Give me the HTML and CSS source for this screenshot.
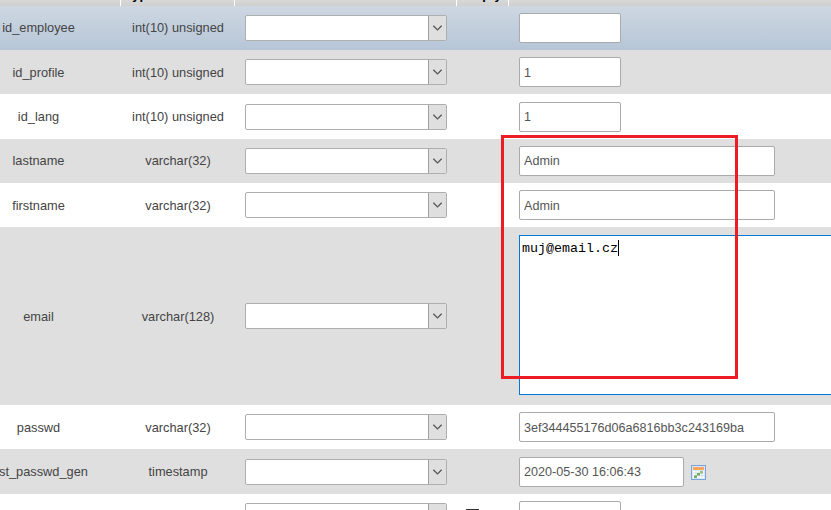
FILE: index.html
```html
<!DOCTYPE html>
<html lang="en">
<head>
<meta charset="utf-8">
<title>Insert</title>
<link rel="stylesheet" href="styles.css">
</head>
<body>
<svg class="defs" width="0" height="0"><symbol id="chev" viewBox="0 0 17 26"><path d="M4 10.5 L8.5 15 L13 10.5" fill="none" stroke="#555" stroke-width="1.4"/></symbol></svg>
<div class="page">
<table class="grid">
<colgroup><col class="c1"><col class="c2"><col class="c3"><col class="c4"><col class="c5"></colgroup>
<thead><tr>
<th><div class="hd"><span>Column</span></div></th>
<th class="left"><div class="hd"><span>Type</span></div></th>
<th><div class="hd"><span>Function</span></div></th>
<th><div class="hd"><span>Empty</span></div></th>
<th><div class="hd"><span>Value</span></div></th>
</tr></thead>
<tbody>
<tr class="r44 blue">
<td>id_employee</td><td>int(10) unsigned</td>
<td><div class="sel"><div class="box"></div><div class="btn"><svg width="17" height="24"><use href="#chev"/></svg></div></div></td><td></td>
<td><input class="inp short" value=""></td>
</tr>
<tr class="r44 grey low">
<td>id_profile</td><td>int(10) unsigned</td>
<td><div class="sel"><div class="box"></div><div class="btn"><svg width="17" height="24"><use href="#chev"/></svg></div></div></td><td></td>
<td><input class="inp short" value="1"></td>
</tr>
<tr class="r45">
<td>id_lang</td><td>int(10) unsigned</td>
<td><div class="sel"><div class="box"></div><div class="btn"><svg width="17" height="24"><use href="#chev"/></svg></div></div></td><td></td>
<td><input class="inp short" value="1"></td>
</tr>
<tr class="r44 grey">
<td>lastname</td><td>varchar(32)</td>
<td><div class="sel"><div class="box"></div><div class="btn"><svg width="17" height="24"><use href="#chev"/></svg></div></div></td><td></td>
<td><input class="inp long" value="Admin"></td>
</tr>
<tr class="r44 low">
<td>firstname</td><td>varchar(32)</td>
<td><div class="sel"><div class="box"></div><div class="btn"><svg width="17" height="24"><use href="#chev"/></svg></div></div></td><td></td>
<td><input class="inp long" value="Admin"></td>
</tr>
<tr class="r178 grey low">
<td>email</td><td>varchar(128)</td>
<td><div class="sel"><div class="box"></div><div class="btn"><svg width="17" height="24"><use href="#chev"/></svg></div></div></td><td></td>
<td><div class="area">muj@email.cz<span class="caret"></span></div></td>
</tr>
<tr class="r44 low">
<td>passwd</td><td>varchar(32)</td>
<td><div class="sel"><div class="box"></div><div class="btn"><svg width="17" height="24"><use href="#chev"/></svg></div></div></td><td></td>
<td><input class="inp long" value="3ef344455176d06a6816bb3c243169ba"></td>
</tr>
<tr class="r45 grey">
<td>last_passwd_gen</td><td>timestamp</td>
<td><div class="sel"><div class="box"></div><div class="btn"><svg width="17" height="24"><use href="#chev"/></svg></div></div></td><td></td>
<td><div class="dt"><input class="inp date" value="2020-05-30 16:06:43">
<svg class="cal" width="15" height="15" viewBox="0 0 15 15"><rect x=".5" y=".5" width="14" height="14" fill="#dce8f7" stroke="#7aa3dc"/><rect x="2" y="2" width="11" height="3" fill="#f7a45c"/><rect x="2" y="6" width="11" height="7" fill="#fff"/><path d="M2 8h11M2 10.5h11M5 6v7M8 6v7M11 6v7" stroke="#c8d4e2" stroke-width=".7"/><rect x="6" y="8" width="3" height="2.5" fill="#6fae5a"/><rect x="3" y="10.5" width="3" height="2.5" fill="#6fae5a"/><rect x="9" y="6" width="3" height="2.5" fill="#8fc47c"/></svg></div></td>
</tr>
<tr class="r44 last">
<td></td><td></td>
<td><div class="sel"><div class="box"></div><div class="btn"><svg width="17" height="24"><use href="#chev"/></svg></div></div></td><td><input class="chk" type="checkbox"></td>
<td><input class="inp short" value=""></td>
</tr>
</tbody>
</table>
<div class="mark"></div>
</div>
</body>
</html>
```
FILE: styles.css
```css
html, body { margin: 0; padding: 0; background: #fff; }
.defs { position: absolute; }
.page {
  position: relative;
  width: 831px;
  height: 510px;
  overflow: hidden;
  font: 12.8px "Liberation Sans", Arial, sans-serif;
  color: #444;
}
.grid {
  table-layout: fixed;
  border-collapse: collapse;
  width: 875px;
  margin-left: -44px;
}
.c1 { width: 164px; }
.c2 { width: 114px; }
.c3 { width: 222px; }
.c4 { width: 52px; }
.c5 { width: 323px; }
th {
  padding: 0;
  height: 6px;
  font-weight: bold;
  color: #000;
  background: linear-gradient(#d8d8d8, #cfcfcf);
  border-right: 1px solid #fff;
}
th:last-child { border-right: 0; }
th.left { text-align: left; padding-left: 5px; }
.hd { height: 6px; overflow: hidden; }
.hd span { display: block; line-height: 14px; margin-top: -12px; }
td { box-sizing: border-box; padding: 0; text-align: center; vertical-align: middle; line-height: 16px; }
td:first-child { padding-left: 1px; }
td:nth-child(2) { padding-left: 2px; }
td:nth-child(3) { padding-left: 11px; text-align: left; }
td:nth-child(5) { padding-left: 11px; text-align: left; }
.low td:nth-child(-n+2) { padding-top: 2px; }
.low .inp { padding-top: 2px; }
.r44 td { height: 44px; }
.r45 td { height: 45px; }
.r178 td { height: 178px; }
.blue { background: linear-gradient(#ced7e2, #b6c6d7); }
.grey { background: #dfdfdf; }
.last td { vertical-align: top; padding-top: 9px; }
.last td:nth-child(5) { padding-top: 7px; }
.sel {
  display: flex;
  box-sizing: border-box;
  width: 202px;
  height: 26px;
  border: 1px solid #aeaeae;
  border-radius: 2px;
  background: #fff;
  overflow: hidden;
}
.box { flex: 1; }
.btn {
  width: 17px;
  background: #dfdfdf;
  border-left: 1px solid #a0a0a0;
  display: flex;
  align-items: center;
  justify-content: center;
}
.inp {
  display: block;
  box-sizing: border-box;
  height: 30px;
  padding: 0 4px;
  border: 1px solid #aaa;
  border-radius: 2px;
  background: #fff;
  font: 12.6px "Liberation Sans", Arial, sans-serif;
  color: #555;
  outline: 0;
}
.short { width: 102px; }
.long { width: 256px; }
.date { width: 165px; }
.dt { display: flex; align-items: center; gap: 7px; }
.cal { margin-top: 2px; }
.area {
  box-sizing: border-box;
  width: 400px;
  height: 160px;
  margin-top: -2px;
  padding: 4px 2px 2px;
  border: 1px solid #0078d7;
  background: #fff;
  font: 13.33px/15px "Liberation Mono", "Courier New", monospace;
  color: #000;
}
.caret {
  display: inline-block;
  width: 1px;
  height: 16px;
  background: #000;
  vertical-align: -4px;
}
.chk {
  appearance: none;
  display: block;
  box-sizing: border-box;
  width: 13px;
  height: 13px;
  margin: 6px 0 0 10px;
  background: #fff;
  border: 1px solid #333;
}
.mark {
  position: absolute;
  left: 501px;
  top: 135px;
  box-sizing: border-box;
  width: 237px;
  height: 244px;
  border: 3px solid #ed1c24;
}
```
